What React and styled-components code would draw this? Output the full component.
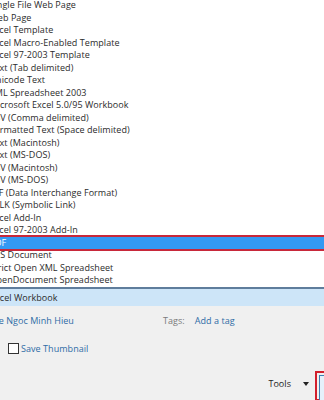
import React from "react";
import styled, { createGlobalStyle } from "styled-components";

const GlobalStyle = createGlobalStyle`
  html, body {
    margin: 0;
    padding: 0;
  }
  body {
    width: 324px;
    height: 400px;
    overflow: hidden;
  }
`;

const Page = styled.div`
  width: 324px;
  height: 400px;
  overflow: hidden;
  background: #f0f0f0;
  font-family: "Open Sans", "Noto Sans", sans-serif;
  font-size: 9px;
  letter-spacing: 0.05px;
  color: #2b2b2b;
`;

const List = styled.ul`
  list-style: none;
  margin: -1px 0 0 0;
  padding: 0;
  background: #ffffff;
`;

const Item = styled.li`
  position: relative;
  height: 12.5px;
  line-height: 12.5px;
  white-space: nowrap;
  text-indent: -10.5px;
  background: ${(props) => (props.selected ? "#3399f3" : "transparent")};
  color: ${(props) => (props.selected ? "#ffffff" : "#2b2b2b")};
  outline: ${(props) => (props.selected ? "2px solid #c8283a" : "none")};
  z-index: ${(props) => (props.selected ? 1 : 0)};
`;

const Combo = styled.div`
  height: 17px;
  line-height: 17px;
  border-top: 2px solid #5f7d9c;
  background: #cde5f8;
  text-indent: -10px;
  white-space: nowrap;
`;

const Meta = styled.div`
  display: flex;
  align-items: center;
  height: 16px;
  margin-top: 7px;
`;

const Author = styled.span`
  width: 163px;
  color: #2f6ca6;
  text-indent: -6px;
  white-space: nowrap;
`;

const Label = styled.span`
  color: #7a7a7a;
  margin-right: 10px;
`;

const Link = styled.span`
  color: #2f6ca6;
`;

const ThumbRow = styled.label`
  display: flex;
  align-items: center;
  gap: 2px;
  margin-top: 13px;
  padding-left: 8px;
  color: #2f6ca6;
`;

const Box = styled.span`
  width: 9px;
  height: 9px;
  border: 1px solid #333;
  background: #fff;
`;

const Footer = styled.div`
  display: flex;
  align-items: center;
  justify-content: flex-end;
  margin-top: 12px;
`;

const Tools = styled.span`
  color: #222;
  margin-right: 12px;
`;

const Caret = styled.span`
  width: 0;
  height: 0;
  border-left: 3px solid transparent;
  border-right: 3px solid transparent;
  border-top: 4px solid #222;
  margin-right: 6px;
`;

const Focus = styled.div`
  width: 9px;
  height: 30px;
  margin-top: 4px;
  border: 2px solid #d21f2c;
  border-right: none;
  padding: 2px 0 0 2px;
  box-sizing: border-box;
`;

const SaveBtn = styled.div`
  height: 100%;
  border: 1px solid #3c7fb1;
  border-right: none;
  background: #e5f1fb;
`;

const types = [
  "Single File Web Page",
  "Web Page",
  "Excel Template",
  "Excel Macro-Enabled Template",
  "Excel 97-2003 Template",
  "Text (Tab delimited)",
  "Unicode Text",
  "XML Spreadsheet 2003",
  "Microsoft Excel 5.0/95 Workbook",
  "CSV (Comma delimited)",
  "Formatted Text (Space delimited)",
  "Text (Macintosh)",
  "Text (MS-DOS)",
  "CSV (Macintosh)",
  "CSV (MS-DOS)",
  "DIF (Data Interchange Format)",
  "SYLK (Symbolic Link)",
  "Excel Add-In",
  "Excel 97-2003 Add-In",
  "PDF",
  "XPS Document",
  "Strict Open XML Spreadsheet",
  "OpenDocument Spreadsheet",
];

const App = () => {
  return (
    <Page>
      <GlobalStyle />
      <List>
        {types.map((t) => (
          <Item key={t} selected={t === "PDF"}>
            {t}
          </Item>
        ))}
      </List>
      <Combo>Excel Workbook</Combo>
      <Meta>
        <Author>Le Ngoc Minh Hieu</Author>
        <Label>Tags:</Label>
        <Link>Add a tag</Link>
      </Meta>
      <ThumbRow>
        <Box />
        Save Thumbnail
      </ThumbRow>
      <Footer>
        <Tools>Tools</Tools>
        <Caret />
        <Focus>
          <SaveBtn />
        </Focus>
      </Footer>
    </Page>
  );
};

export default App;
